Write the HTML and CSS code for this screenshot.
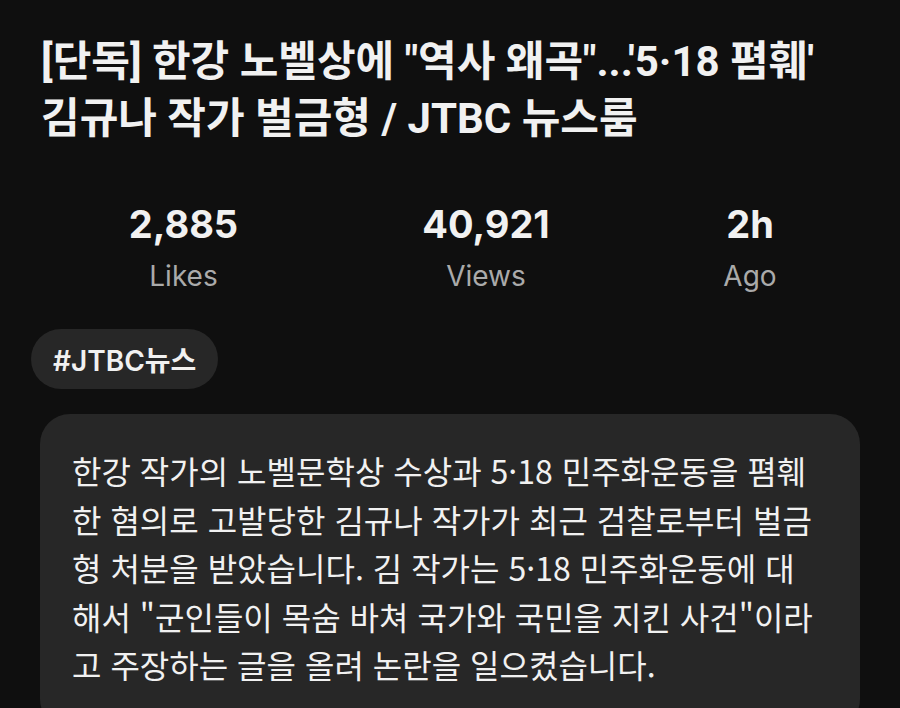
FILE: index.html
```html
<!DOCTYPE html>
<html lang="ko">
<head>
<meta charset="utf-8">
<link rel="stylesheet" href="styles.css">
</head>
<body>
<main class="page">
  <h1 class="title">[단독] 한강 노벨상에 "역사 왜곡"...'5·18 폄훼'<br>김규나 작가 벌금형 / JTBC 뉴스룸</h1>
  <section class="stats">
    <div class="stat">
      <div class="stat-num">2,885</div>
      <div class="stat-label">Likes</div>
    </div>
    <div class="stat">
      <div class="stat-num">40,921</div>
      <div class="stat-label">Views</div>
    </div>
    <div class="stat">
      <div class="stat-num">2h</div>
      <div class="stat-label">Ago</div>
    </div>
  </section>
  <div class="tags">
    <span class="chip">#JTBC뉴스</span>
  </div>
  <div class="desc">
    <p class="desc-text">한강 작가의 노벨문학상 수상과 5·18 민주화운동을 폄훼<br>한 혐의로 고발당한 김규나 작가가 최근 검찰로부터 벌금<br>형 처분을 받았습니다. 김 작가는 5·18 민주화운동에 대<br>해서 "군인들이 목숨 바쳐 국가와 국민을 지킨 사건"이라<br>고 주장하는 글을 올려 논란을 일으켰습니다.</p>
  </div>
</main>
</body>
</html>
```
FILE: styles.css
```css
html, body {
  margin: 0;
  padding: 0;
  background: #0f0f0f;
  height: 100%;
  overflow: hidden;
}
.page {
  color: #f1f1f1;
  font-family: "Noto Sans CJK KR", sans-serif;
}
.title {
  margin: 0;
  padding: 33px 0 0 41px;
  font-family: Roboto, "Noto Sans CJK KR", sans-serif;
  font-weight: 700;
  font-size: 42px;
  line-height: 57px;
  white-space: nowrap;
  color: #f1f1f1;
}
.stats {
  display: grid;
  grid-template-columns: 367px 238px 290px;
  justify-items: center;
  margin-top: 53px;
}
.stat {
  display: flex;
  flex-direction: column;
  align-items: center;
}
.stat-num {
  font-family: Inter, "Noto Sans CJK KR", sans-serif;
  font-weight: 700;
  font-size: 38px;
  line-height: 48px;
  color: #f1f1f1;
}
.stat-label {
  font-family: Inter, sans-serif;
  font-size: 28px;
  line-height: 36px;
  margin-top: 10px;
  color: #aaaaaa;
}
.tags {
  display: flex;
  margin-top: 35px;
  padding-left: 31px;
}
.chip {
  display: inline-flex;
  align-items: center;
  height: 60px;
  padding: 0 22px;
  border-radius: 30px;
  background: #272727;
  font-family: Inter, "Noto Sans CJK KR", sans-serif;
  font-weight: 600;
  font-size: 28px;
  color: #f1f1f1;
}
.desc {
  margin: 25px 40px 0 40px;
  padding: 32px 32px 40px;
  background: #272727;
  border-radius: 30px;
}
.desc-text {
  margin: 0;
  font-size: 32px;
  line-height: 48.5px;
  white-space: nowrap;
  color: #f1f1f1;
}
```
